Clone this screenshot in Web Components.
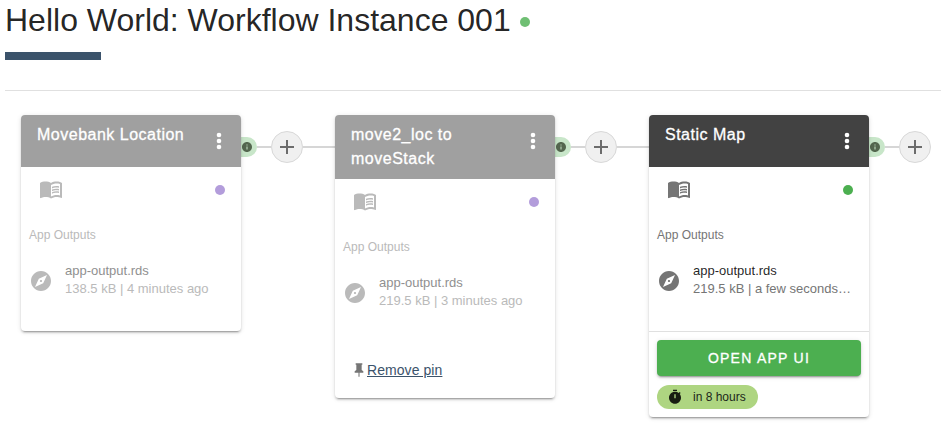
<!DOCTYPE html>
<html lang="en">
<head>
<meta charset="utf-8">
<title>Workflow</title>
<style>
body{margin:0;background:#fff;font-family:"Liberation Sans",Arial,sans-serif;color:rgba(0,0,0,.87);overflow:hidden}
</style>
</head>
<body>
<workflow-page>
  <workflow-heading slot="heading">Hello World: Workflow Instance 001</workflow-heading>
  <app-card name="Movebank Location" faded file="app-output.rds" meta="138.5 kB | 4 minutes ago"></app-card>
  <app-link></app-link>
  <app-card name="move2_loc to moveStack" faded file="app-output.rds" meta="219.5 kB | 3 minutes ago">
    <pin-link slot="pin">Remove pin</pin-link>
  </app-card>
  <app-link></app-link>
  <app-card name="Static Map" file="app-output.rds" meta="219.5 kB | a few seconds…">
    <app-actions slot="actions">
      <open-button>OPEN APP UI</open-button>
      <time-chip>in 8 hours</time-chip>
    </app-actions>
  </app-card>
  <app-link last></app-link>
</workflow-page>
<script>
const define=(name,html,init)=>{
  customElements.define(name,class extends HTMLElement{
    constructor(){
      super();
      this.attachShadow({mode:'open'}).innerHTML=html;
    }
    connectedCallback(){ if(init) init(this,this.shadowRoot); }
  });
};

const paths={
  book:'<path d="M2 6.5C5 5.200 9 5.200 12 6.800V20.500C9 18.800 5 18.800 2 19.800z"/><path d="M21 5c-1.11-.35-2.33-.5-3.5-.5-1.95 0-4.05.4-5.5 1.5-1.45-1.1-3.55-1.5-5.5-1.5S2.45 4.9 1 6v14.65c0 .25.25.5.5.5.1 0 .15-.05.25-.05C3.1 20.45 5.05 20 6.5 20c1.950 0 4.050.4 5.5 1.500 1.350-.850 3.800-1.500 5.500-1.500 1.650 0 3.350.3 4.750 1.050.1.050.150.050.250.050.250 0 .5-.250.5-.5V6c-.6-.45-1.25-.75-2-1zm0 13.5c-1.1-.35-2.3-.5-3.5-.5-1.700 0-4.150.650-5.500 1.500V8c1.350-.850 3.800-1.500 5.500-1.500 1.200 0 2.400.150 3.500.5v11.5z"/><path d="M17.5 10.5c.88 0 1.73.09 2.5.26V9.24c-.79-.15-1.64-.24-2.5-.24-1.7 0-3.24.29-4.5.83v1.66c1.13-.64 2.7-.99 4.5-.99zM13 12.49v1.66c1.13-.64 2.7-.99 4.5-.99.88 0 1.73.09 2.5.26V11.9c-.79-.15-1.64-.24-2.5-.24-1.7 0-3.24.3-4.5.83zM17.5 14.33c-1.7 0-3.24.29-4.5.83v1.66c1.13-.64 2.7-.99 4.5-.99.88 0 1.73.09 2.5.26v-1.52c-.79-.16-1.64-.24-2.5-.24z"/>',
  more:'<circle cx="12" cy="6" r="2.300"/><circle cx="12" cy="12" r="2.300"/><circle cx="12" cy="18" r="2.300"/>',
  explore:'<path d="M12 10.9c-.61 0-1.1.49-1.1 1.1s.49 1.1 1.1 1.1c.61 0 1.1-.49 1.1-1.1s-.49-1.1-1.1-1.1zM12 2C6.48 2 2 6.48 2 12s4.48 10 10 10 10-4.48 10-10S17.52 2 12 2zm2.19 12.19L6 18l3.81-8.19L18 6l-3.81 8.19z"/>',
  info:'<path d="M12 2C6.48 2 2 6.48 2 12s4.48 10 10 10 10-4.48 10-10S17.52 2 12 2zm1 15h-2v-6h2v6zm0-8h-2V7h2v2z"/>',
  add:'<path d="M19 13h-6v6h-2v-6H5v-2h6V5h2v6h6v2z"/>',
  pin:'<path d="M16 12V4h1V2H7v2h1v8l-2.500 2v2H11.200v6h1.600v-6h5.700v-2L16 12z"/>',
  timer:'<path d="M15 1H9v2h6V1zm4.03 6.39 1.42-1.42c-.43-.51-.9-.99-1.41-1.41l-1.42 1.42C16.07 4.74 14.12 4 12 4c-4.97 0-9 4.03-9 9s4.02 9 9 9 9-4.03 9-9c0-2.12-.74-4.07-1.97-5.61zM13 14h-2V8h2v6z"/>'
};

define('md-icon',`<style>:host{display:block;flex:none;width:24px;height:24px}svg{display:block;width:100%;height:100%;fill:currentColor}</style><svg viewBox="0 0 24 24"></svg>`,
  (el,root)=>{ root.querySelector('svg').innerHTML=paths[el.getAttribute('name')]; });

define('status-dot',`<style>:host{display:block;flex:none;width:10px;height:10px;border-radius:50%;background:currentColor}</style>`);

define('workflow-heading',`<style>
:host{display:block;padding-left:5px}
.row{display:flex;align-items:center;height:40px;gap:9px}
h1{margin:0;font-size:32px;font-weight:400;line-height:40px;white-space:nowrap}
status-dot{color:#6fbf73;margin-top:4px}
.bar{width:96px;height:8px;background:#3b536b;margin-top:12px}
hr{margin:30px 0 0;border:0;height:1px;background:#e0e0e0}
</style><div class="row"><h1><slot></slot></h1><status-dot></status-dot></div><div class="bar"></div><hr>`);

define('workflow-page',`<style>
:host{display:block;width:941px;height:431px;overflow:hidden}
.flow{display:flex;align-items:flex-start;padding:24px 0 0 21px}
</style><slot name="heading"></slot><div class="flow"><slot></slot></div>`);

define('app-link',`<style>
:host{display:flex;flex:none;align-items:center;width:94px;height:32px;margin-top:16px}
:host([last]) .tail{visibility:hidden}
.badge{width:16px;height:20px;box-sizing:border-box;border-radius:0 10px 10px 0;background:#c8e6c9;display:flex;align-items:center}
.badge md-icon{width:12px;height:12px;color:#54674f}
.line{width:14px;height:2px;background:#d6d6d6}
.add{width:32px;height:32px;box-sizing:border-box;border:1px solid #d8d8d8;border-radius:50%;background:#f0f0f0;color:#6c6c6c;display:flex;align-items:center;justify-content:center}
.tail{flex:1}
</style><div class="badge"><md-icon name="info"></md-icon></div><div class="line"></div><div class="add"><md-icon name="add"></md-icon></div><div class="line tail"></div>`);

define('app-card',`<style>
:host{display:block;flex:none;width:220px;border-radius:4px;background:#fff;position:relative;z-index:1;box-shadow:0 3px 1px -2px rgba(0,0,0,.2),0 2px 2px 0 rgba(0,0,0,.14),0 1px 5px 0 rgba(0,0,0,.12)}
header{display:flex;align-items:flex-start;justify-content:space-between;padding:8px 4px 8px 16px;background:#424242;border-radius:4px 4px 0 0;color:#fff}
.name{font-size:16px;line-height:24px;letter-spacing:.5px;-webkit-text-stroke:.3px #fff}
.menu{flex:none;width:36px;height:36px;display:flex;align-items:center;justify-content:center}
.body{height:164px;color:#757575}
.tools{display:flex;align-items:center;justify-content:space-between;padding:10px 16px 0 18px}
.tools status-dot{color:#4caf50;margin-top:2px}
.label{font-size:12px;line-height:20px;margin:24px 8px 0}
.item{display:flex;align-items:center;gap:12px;margin:16px 8px 0;height:40px}
.text{font-size:13px;line-height:18px;white-space:nowrap;padding-bottom:2px}
.file{color:rgba(0,0,0,.87)}
:host([faded]) header{background:#a0a0a0}
:host([faded]) .body{color:#bababa}
:host([faded]) .file{color:#909090}
:host([faded]) status-dot{color:#b39ddb}
</style>
<header><div class="name"></div><div class="menu"><md-icon name="more"></md-icon></div></header>
<div class="body">
<div class="tools"><md-icon name="book"></md-icon><status-dot></status-dot></div>
<div class="label">App Outputs</div>
<div class="item"><md-icon name="explore"></md-icon><div class="text"><div class="file"></div><div class="meta"></div></div></div>
</div>
<slot name="pin"></slot><slot name="actions"></slot>`,
(el,root)=>{
  for(const key of ['name','file','meta'])
    root.querySelector('.'+key).textContent=el.getAttribute(key);
});

define('pin-link',`<style>
:host{display:flex;align-items:center;height:20px;padding:17px 0 18px 16px;font-size:14px;line-height:20px}
md-icon{width:16px;height:16px;color:#757575}
a{color:#3b536b;text-decoration:underline;letter-spacing:.07px}
</style><md-icon name="pin"></md-icon><a><slot></slot></a>`);

define('app-actions',`<style>:host{display:flex;flex-direction:column;align-items:flex-start;gap:9px;padding:8px;border-top:1px solid #e0e0e0}</style><slot></slot>`);

define('open-button',`<style>:host{display:block;align-self:stretch;height:36px;line-height:36px;border-radius:4px;background:#4caf50;color:#fff;text-align:center;font-size:14px;letter-spacing:1.25px;-webkit-text-stroke:.3px #fff;box-shadow:0 3px 1px -2px rgba(0,0,0,.2),0 2px 2px 0 rgba(0,0,0,.14),0 1px 5px 0 rgba(0,0,0,.12)}</style><slot></slot>`);

define('time-chip',`<style>:host{display:flex;align-items:center;gap:10px;box-sizing:border-box;width:101px;height:24px;border-radius:12px;background:#aed581;color:#20261a;padding-left:10px;font-size:12px;white-space:nowrap}md-icon{width:16px;height:16px;color:#171c11}</style><md-icon name="timer"></md-icon><span><slot></slot></span>`);
</script>
</body>
</html>
